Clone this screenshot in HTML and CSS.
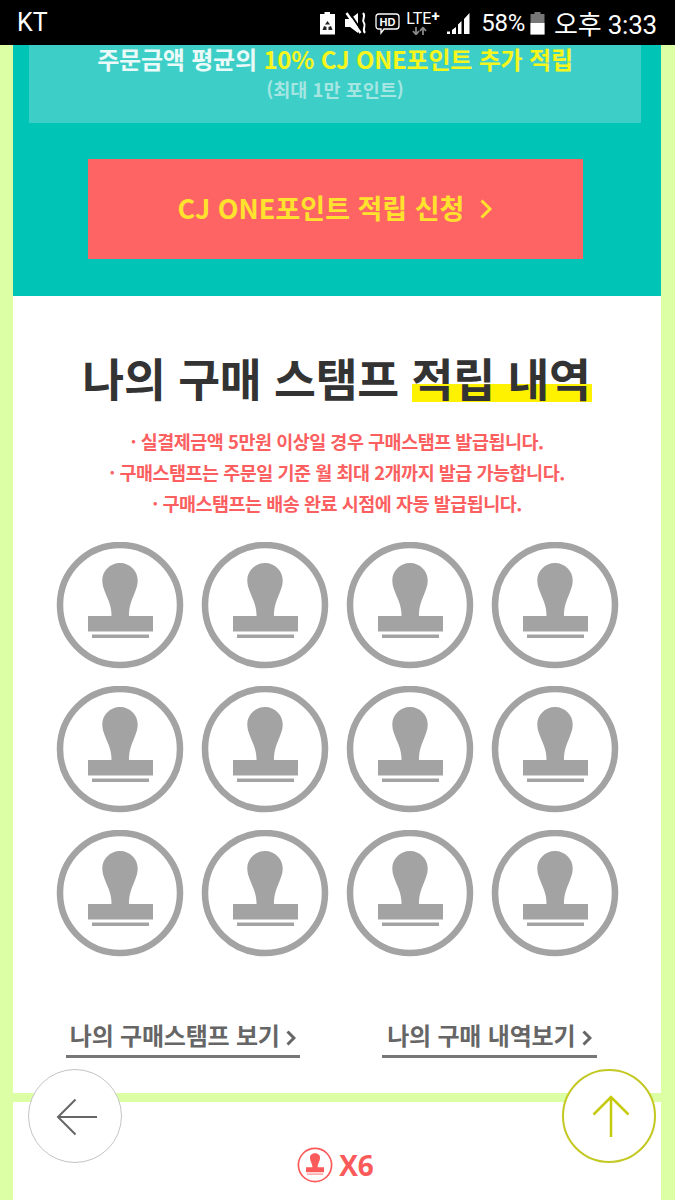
FILE: index.html
```html
<!DOCTYPE html>
<html lang="ko">
<head>
<meta charset="utf-8">
<title>구매 스탬프</title>
<link rel="stylesheet" href="styles.css">
</head>
<body>
<svg class="defs" width="0" height="0" aria-hidden="true">
  <symbol id="stamp" viewBox="0 0 128 128">
    <circle cx="64" cy="63" r="60" fill="#fff" stroke="#a3a3a3" stroke-width="6.5"/>
    <path d="M55.500 76C56 64 52 58 49 50C47 45 46.300 42 46.300 38C46.300 29 54 21 64 21C74 21 81.700 29 81.700 38C81.700 42 81 45 79 50C76 58 72.500 64 73 76Z" fill="#a3a3a3"/>
    <path d="M32 74H97V89.500H32Z" fill="#a3a3a3"/>
    <path d="M36 92.500H93V96H36Z" fill="#a3a3a3"/>
  </symbol>
</svg>
<header class="status">
  <span class="carrier">KT</span>
  <div class="status-right">
    <svg class="ic i-rec" width="17" height="24" viewBox="0 0 17 24"><path d="M5.500 1H11V3H16V23.500H1V3H5.500Z" fill="#fff"/><path d="M8.500 10L11 13.500H6ZM5 15L3.500 19H7.500V16ZM9.500 16V19H13.500L12 15Z" fill="#222"/></svg>
    <svg class="ic i-mute" width="24" height="24" viewBox="0 0 24 24"><path d="M1 8H6L14 2V22L6 16H1Z" fill="#fff"/><path d="M5 1L19 22" stroke="#000" stroke-width="2"/><path d="M2.500 2L16.500 22" stroke="#fff" stroke-width="2.500"/><path d="M19 2C22.500 6 17 8 20 12C22.500 15 17.500 18 21 22" fill="none" stroke="#fff" stroke-width="2"/></svg>
    <svg class="ic i-hd" width="25" height="24" viewBox="0 0 25 24"><path d="M4 3H21Q24 3 24 6V15Q24 18 21 18H9L6 22V18H4Q1 18 1 15V6Q1 3 4 3Z" fill="none" stroke="#fff" stroke-width="1.300"/><text x="12.500" y="15" class="hd">HD</text></svg>
    <div class="lte"><span class="lte-t">LTE<b>+</b></span>
      <svg class="lte-a" width="15" height="8" viewBox="0 0 15 8"><path d="M4 0V7M1 4L4 7.500L7 4M11 8V1M8 4L11 .5L14 4" fill="none" stroke="#888" stroke-width="1.800"/></svg>
    </div>
    <svg class="ic i-sig" width="24" height="24" viewBox="0 0 24 24"><path d="M1 23H4V20.500H1ZM6 23H10V16L6 19ZM12 23H15.500V10L12 13.500ZM18 23H23.500V2L18 8Z" fill="#fff"/></svg>
    <span class="pct">58%</span>
    <svg class="ic i-bat" width="15" height="24" viewBox="0 0 15 24"><path d="M4.500 1H10.500V3H14.500V23.500H0.500V3H4.500Z" fill="#777"/><path d="M0.500 12H14.500V23.500H0.500Z" fill="#fff"/></svg>
    <span class="time">오후 3:33</span>
  </div>
</header>
<main class="page">
  <section class="promo">
    <div class="promo-box">
      <p class="promo-main">주문금액 평균의 <em>10% CJ ONE포인트 추가 적립</em></p>
      <p class="promo-sub">(최대 1만 포인트)</p>
    </div>
    <a class="promo-btn"><span class="promo-label">CJ ONE포인트 적립 신청</span>
      <svg width="14" height="22" viewBox="0 0 14 22"><path d="M2.500 2.500L11 11L2.500 19.500" fill="none" stroke="#ffe22e" stroke-width="3"/></svg>
    </a>
  </section>
  <section class="stamps">
    <h1 class="title">나의 구매 스탬프 <span class="mark">적립 내역</span></h1>
    <ul class="notes">
      <li>· 실결제금액 5만원 이상일 경우 구매스탬프 발급됩니다.</li>
      <li>· 구매스탬프는 주문일 기준 월 최대 2개까지 발급 가능합니다.</li>
      <li>· 구매스탬프는 배송 완료 시점에 자동 발급됩니다.</li>
    </ul>
    <div class="grid">
      <svg class="stamp"><use href="#stamp"/></svg><svg class="stamp"><use href="#stamp"/></svg><svg class="stamp"><use href="#stamp"/></svg><svg class="stamp"><use href="#stamp"/></svg>
      <svg class="stamp"><use href="#stamp"/></svg><svg class="stamp"><use href="#stamp"/></svg><svg class="stamp"><use href="#stamp"/></svg><svg class="stamp"><use href="#stamp"/></svg>
      <svg class="stamp"><use href="#stamp"/></svg><svg class="stamp"><use href="#stamp"/></svg><svg class="stamp"><use href="#stamp"/></svg><svg class="stamp"><use href="#stamp"/></svg>
    </div>
    <div class="links">
      <a class="link link-a">나의 구매스탬프 보기 <svg width="10" height="16" viewBox="0 0 10 16"><path d="M1.500 1.500L8 8L1.500 14.500" fill="none" stroke="#666" stroke-width="3"/></svg></a>
      <a class="link link-b">나의 구매 내역보기 <svg width="10" height="16" viewBox="0 0 10 16"><path d="M1.500 1.500L8 8L1.500 14.500" fill="none" stroke="#666" stroke-width="3"/></svg></a>
    </div>
  </section>
  <section class="next">
    <div class="count">
      <svg width="36" height="36" viewBox="0 0 128 128"><circle cx="64" cy="64" r="59" fill="#fff" stroke="#fb5a5a" stroke-width="6"/><path d="M55 72C55 60 46 50 46 38C46 28 54 22 64 22C74 22 82 28 82 38C82 50 73 60 73 72H96V90H32V72Z" fill="#fb5a5a"/><path d="M35 94H93V99H35Z" fill="#fb5a5a" opacity=".6"/></svg>
      <span>X6</span>
    </div>
  </section>
</main>
<button class="fab fab-back" aria-label="뒤로">
  <svg width="42" height="38" viewBox="0 0 42 38"><path d="M41 19H2M19.500 1.500L2 19L19.500 36.500" fill="none" stroke="#666" stroke-width="2"/></svg>
</button>
<button class="fab fab-top" aria-label="위로">
  <svg width="38" height="42" viewBox="0 0 38 42"><path d="M19 42V2M1.500 19.500L19 2L36.500 19.500" fill="none" stroke="#c6ca0c" stroke-width="2.500"/></svg>
</button>
</body>
</html>
```
FILE: styles.css
```css
* { box-sizing: border-box; }
html, body { margin: 0; padding: 0; }
body {
  width: 675px;
  height: 1200px;
  overflow: hidden;
  position: relative;
  background: #dcffa6;
  font-family: "Noto Sans CJK KR", "Noto Sans", sans-serif;
}
.defs { position: absolute; }
.status {
  height: 45px;
  background: #000;
  color: #fff;
  display: flex;
  align-items: center;
  justify-content: space-between;
  padding: 0 18px 0 17px;
  font-family: Roboto, "Noto Sans CJK KR", sans-serif;
}
.carrier { font-size: 25px; line-height: 45px; }
.status-right { display: flex; align-items: center; }
.ic { display: block; }
.i-mute { margin-left: 8px; }
.i-hd { margin-left: 7px; }
.lte { margin-left: 6px; width: 35px; height: 24px; display: flex; flex-direction: column; align-items: flex-start; line-height: 1; }
.i-sig { margin-left: 5px; }
.pct { margin-left: 11px; font-size: 24px; letter-spacing: -.3px; }
.i-bat { margin-left: 5px; }
.time { margin-left: 9px; font-size: 26px; letter-spacing: -.2px; }
.hd { font: 700 11px "Liberation Sans", sans-serif; fill: #fff; text-anchor: middle; }
.lte-t { font-size: 16px; height: 15px; line-height: 15px; }
.lte-t b { font-size: 15px; position: relative; top: -3px; }
.lte-a { display: block; margin: 1px 0 0 6px; }

.page { margin: 0 14px 0 13px; }
.promo {
  height: 251px;
  background: #00c4b5;
  padding: 0 20px 0 16px;
  display: flex;
  flex-direction: column;
}
.promo-box {
  height: 78px;
  background: #3dcfc7;
  text-align: center;
}
.promo-main {
  margin: 0;
  font-size: 24px;
  font-weight: 700;
  line-height: 27px;
  color: #eafaf8;
  letter-spacing: -.2px;
}
.promo-main em { font-style: normal; color: #f6f51c; }
.promo-sub {
  margin: 3px 0 0;
  font-size: 18.500px;
  line-height: 28px;
  font-weight: 700;
  color: #a5e6e2;
}
.promo-btn {
  width: 495px;
  height: 100px;
  margin: 36px 0 0 59px;
  background: #ff6464;
  color: #ffe22e;
  font-size: 27px;
  font-weight: 700;
  display: flex;
  align-items: center;
  justify-content: center;
  gap: 15px;
}
.promo-label { position: relative; top: -2px; }
.stamps {
  background: #fff;
  height: 797px;
  padding-top: 48px;
  display: flex;
  flex-direction: column;
  align-items: center;
}
.title {
  margin: 0;
  font-size: 45.500px;
  line-height: 66px;
  font-weight: 700;
  color: #333;
  letter-spacing: -.2px;
}
.mark { background: linear-gradient(#fff200, #fff200) 0 calc(100% - 8px) / 100% 18px no-repeat; padding: 0 1px 0 0; }
.notes {
  list-style: none;
  margin: 16px 0 0;
  padding: 0;
  text-align: center;
  color: #fb5f5f;
  font-size: 18.500px;
  font-weight: 700;
  line-height: 31px;
  letter-spacing: -.5px;
}
.grid {
  display: grid;
  grid-template-columns: repeat(4, 128px);
  grid-auto-rows: 128px;
  column-gap: 17px;
  row-gap: 16px;
  margin-top: 23px;
}
.stamp { width: 128px; height: 128px; display: block; }
.links {
  align-self: stretch;
  display: flex;
  margin-top: 54px;
  padding-left: 53px;
  gap: 82px;
}
.link {
  height: 46px;
  border-bottom: 3px solid #777;
  color: #666;
  font-size: 24px;
  font-weight: 700;
  line-height: 45px;
  text-align: center;
  letter-spacing: -.2px;
  white-space: nowrap;
}
.link svg { vertical-align: -1px; }
.link-a { width: 234px; }
.link-b { width: 215px; }
.next {
  margin-top: 9px;
  background: #fff;
  height: 98px;
  display: flex;
  justify-content: center;
  padding: 45px 3px 0 0;
}
.count { display: flex; align-items: flex-start; gap: 6px; height: 36px; }
.count span {
  color: #fb5a5a;
  font: 700 28px/36px "Open Sans", sans-serif;
}
.fab {
  position: absolute;
  top: 1069px;
  width: 94px;
  height: 94px;
  border-radius: 50%;
  background: #fff;
  padding: 0;
  display: flex;
  align-items: center;
  justify-content: center;
}
.fab-back { left: 28px; border: 1.500px solid #c4c4c4; padding: 2px 0 0 4px; }
.fab-top { left: 562px; border: 2px solid #c3c822; padding: 0 0 0 4px; }
```
